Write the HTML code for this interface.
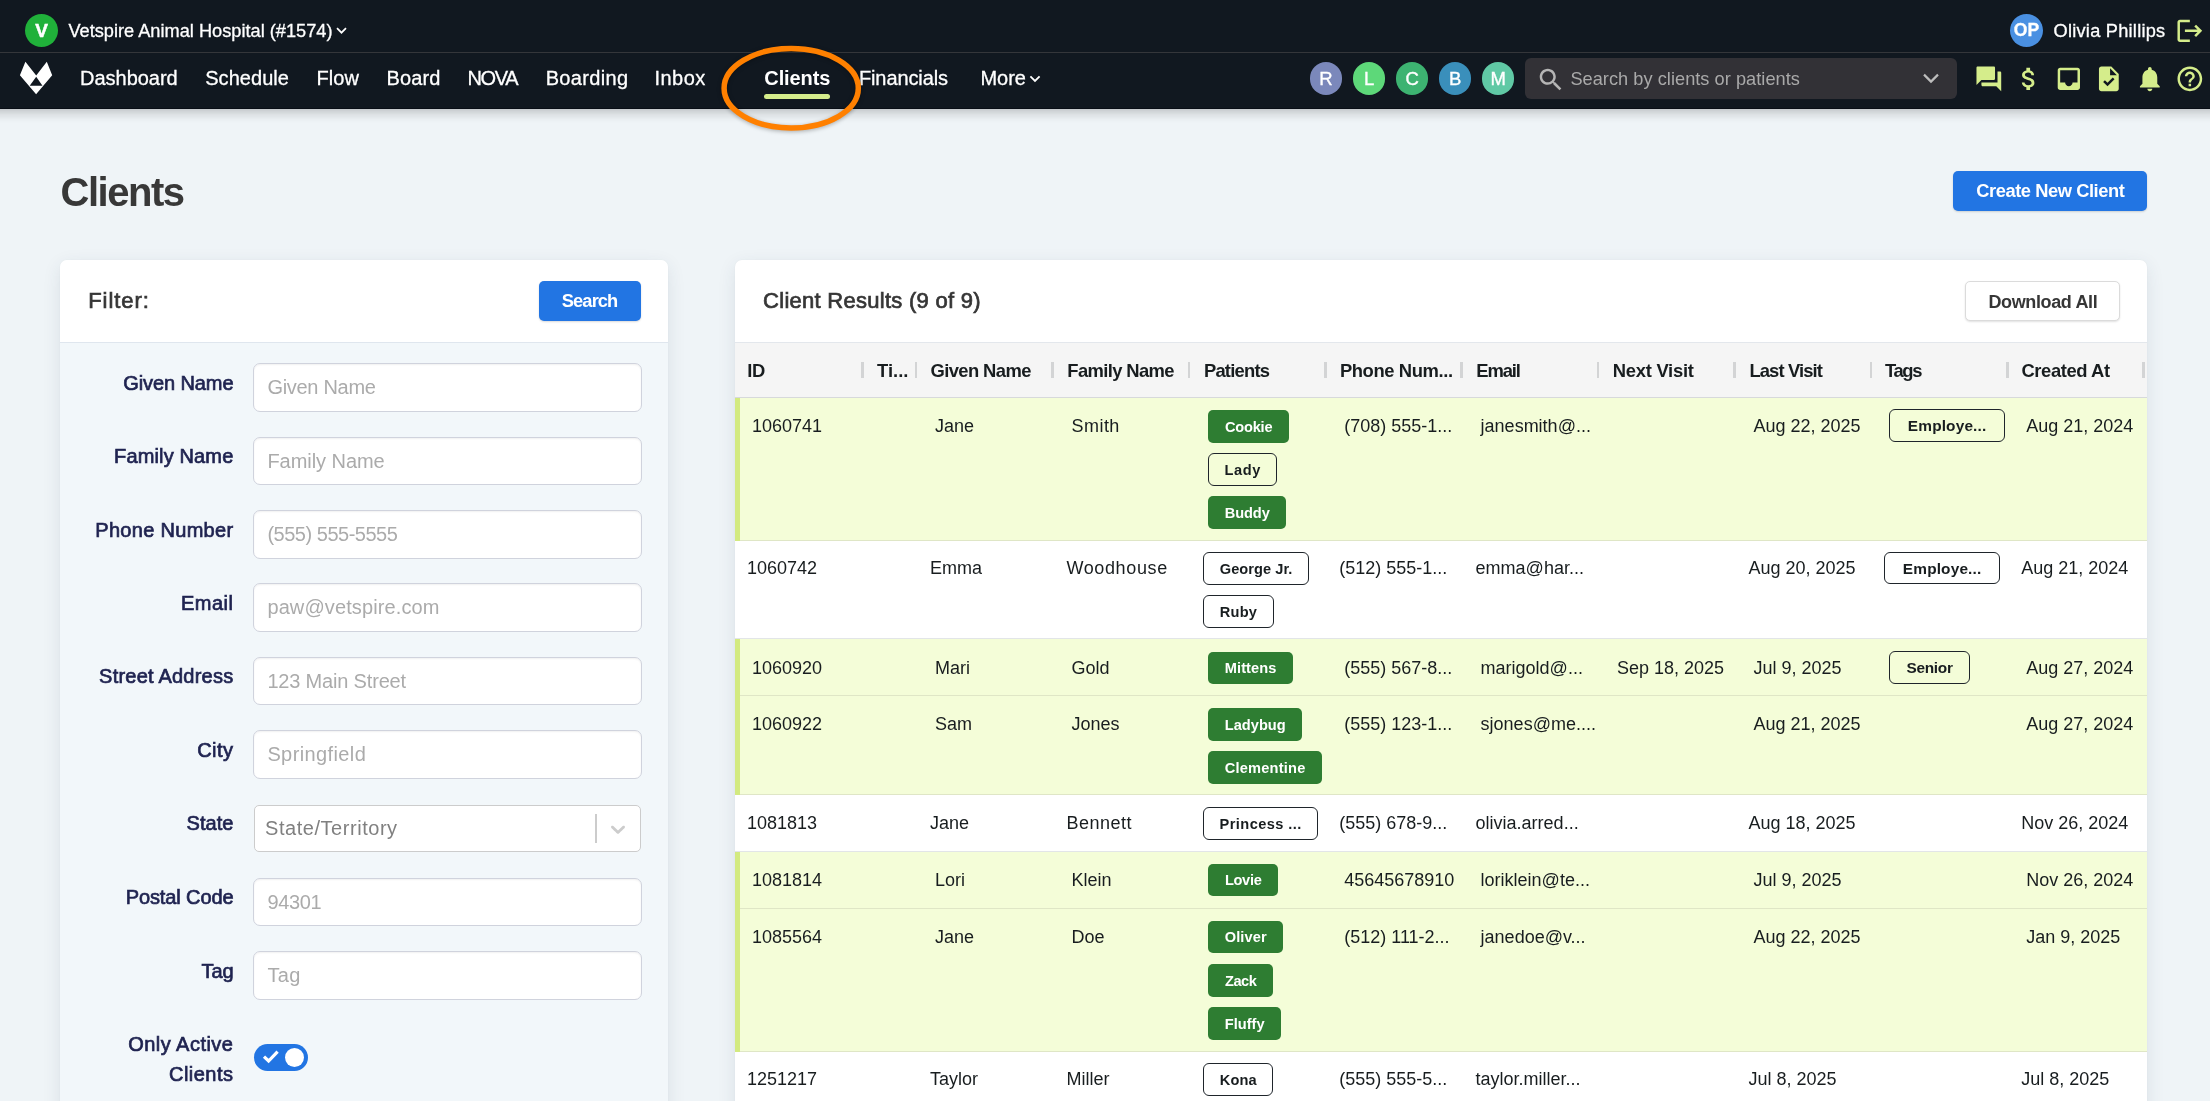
<!DOCTYPE html>
<html lang="en">
<head>
<meta charset="utf-8">
<title>Clients - Vetspire Animal Hospital</title>
<style>
html,body{margin:0;padding:0;}
body{width:2210px;height:1101px;overflow:hidden;background:#eff4f7;font-family:"Liberation Sans",sans-serif;position:relative;}
#app{position:absolute;left:0;top:0;width:2210px;height:1101px;overflow:hidden;will-change:transform;}
span{display:block;}
</style>
</head>
<body>
<div id="app">
<main>
<span id="t21" style="position:absolute;left:60.60px;top:171.54px;font-size:40px;line-height:1;color:#383838;font-weight:700;white-space:nowrap;letter-spacing:-1.493px;">Clients</span>
<div style="position:absolute;left:1953px;top:171px;width:194.00px;height:40.00px;background:#2275e3;border-radius:5px;box-shadow:0 1px 2px rgba(0,0,0,.15);"></div>
<span id="t22" style="position:absolute;left:1976.30px;top:181.71px;font-size:18.3px;line-height:1;color:#fff;font-weight:700;white-space:nowrap;letter-spacing:-0.434px;">Create New Client</span>
<section aria-label="Filter">
<div style="position:absolute;left:60px;top:260px;width:608.00px;height:870.00px;background:#f2f7fa;border-radius:7px;box-shadow:0 5px 18px rgba(40,60,90,.10), 0 0 2px rgba(40,60,90,.06);"></div>
<div style="position:absolute;left:60px;top:260px;width:608.00px;height:82.00px;background:#fff;border-radius:7px 7px 0 0;border-bottom:1px solid #dfe6ee;"></div>
<span id="t23" style="position:absolute;left:88.20px;top:290.38px;font-size:22px;line-height:1;color:#363636;font-weight:400;white-space:nowrap;letter-spacing:0.933px;-webkit-text-stroke:.7px #363636;">Filter:</span>
<div style="position:absolute;left:539px;top:281.2px;width:102.00px;height:39.80px;background:#2275e3;border-radius:5px;box-shadow:0 1px 2px rgba(0,0,0,.15);"></div>
<span id="t24" style="position:absolute;left:561.80px;top:292.11px;font-size:18.3px;line-height:1;color:#fff;font-weight:700;white-space:nowrap;letter-spacing:-0.897px;">Search</span>
<div style="position:absolute;left:253px;top:363.2px;width:389.00px;height:48.50px;background:#fff;border:1.4px solid #d0d3dd;border-radius:7px;box-sizing:border-box;box-shadow:inset 0 1px 2px rgba(10,10,10,.06);"></div>
<span id="t25" style="position:absolute;left:267.40px;top:377.37px;font-size:20px;line-height:1;color:#ababab;font-weight:400;white-space:nowrap;letter-spacing:-0.295px;">Given Name</span>
<span id="t26" style="position:absolute;right:1976.60px;top:372.87px;font-size:20px;line-height:1;color:#1f2350;font-weight:400;white-space:nowrap;letter-spacing:-0.106px;-webkit-text-stroke:.7px #1f2350;">Given Name</span>
<div style="position:absolute;left:253px;top:436.7px;width:389.00px;height:48.50px;background:#fff;border:1.4px solid #d0d3dd;border-radius:7px;box-sizing:border-box;box-shadow:inset 0 1px 2px rgba(10,10,10,.06);"></div>
<span id="t27" style="position:absolute;left:267.40px;top:450.87px;font-size:20px;line-height:1;color:#ababab;font-weight:400;white-space:nowrap;letter-spacing:-0.050px;">Family Name</span>
<span id="t28" style="position:absolute;right:1976.60px;top:446.37px;font-size:20px;line-height:1;color:#1f2350;font-weight:400;white-space:nowrap;letter-spacing:0.140px;-webkit-text-stroke:.7px #1f2350;">Family Name</span>
<div style="position:absolute;left:253px;top:510.0px;width:389.00px;height:48.50px;background:#fff;border:1.4px solid #d0d3dd;border-radius:7px;box-sizing:border-box;box-shadow:inset 0 1px 2px rgba(10,10,10,.06);"></div>
<span id="t29" style="position:absolute;left:267.40px;top:524.17px;font-size:20px;line-height:1;color:#ababab;font-weight:400;white-space:nowrap;letter-spacing:-0.483px;">(555) 555-5555</span>
<span id="t30" style="position:absolute;right:1976.60px;top:519.67px;font-size:20px;line-height:1;color:#1f2350;font-weight:400;white-space:nowrap;letter-spacing:0.297px;-webkit-text-stroke:.7px #1f2350;">Phone Number</span>
<div style="position:absolute;left:253px;top:583.3px;width:389.00px;height:48.50px;background:#fff;border:1.4px solid #d0d3dd;border-radius:7px;box-sizing:border-box;box-shadow:inset 0 1px 2px rgba(10,10,10,.06);"></div>
<span id="t31" style="position:absolute;left:267.40px;top:597.47px;font-size:20px;line-height:1;color:#ababab;font-weight:400;white-space:nowrap;letter-spacing:0.115px;">paw@vetspire.com</span>
<span id="t32" style="position:absolute;right:1976.60px;top:592.97px;font-size:20px;line-height:1;color:#1f2350;font-weight:400;white-space:nowrap;letter-spacing:0.471px;-webkit-text-stroke:.7px #1f2350;">Email</span>
<div style="position:absolute;left:253px;top:656.8px;width:389.00px;height:48.50px;background:#fff;border:1.4px solid #d0d3dd;border-radius:7px;box-sizing:border-box;box-shadow:inset 0 1px 2px rgba(10,10,10,.06);"></div>
<span id="t33" style="position:absolute;left:267.40px;top:670.97px;font-size:20px;line-height:1;color:#ababab;font-weight:400;white-space:nowrap;letter-spacing:-0.179px;">123 Main Street</span>
<span id="t34" style="position:absolute;right:1976.60px;top:666.47px;font-size:20px;line-height:1;color:#1f2350;font-weight:400;white-space:nowrap;letter-spacing:0.224px;-webkit-text-stroke:.7px #1f2350;">Street Address</span>
<div style="position:absolute;left:253px;top:730.3px;width:389.00px;height:48.50px;background:#fff;border:1.4px solid #d0d3dd;border-radius:7px;box-sizing:border-box;box-shadow:inset 0 1px 2px rgba(10,10,10,.06);"></div>
<span id="t35" style="position:absolute;left:267.40px;top:744.47px;font-size:20px;line-height:1;color:#ababab;font-weight:400;white-space:nowrap;letter-spacing:0.388px;">Springfield</span>
<span id="t36" style="position:absolute;right:1976.60px;top:739.97px;font-size:20px;line-height:1;color:#1f2350;font-weight:400;white-space:nowrap;letter-spacing:0.449px;-webkit-text-stroke:.7px #1f2350;">City</span>
<div style="position:absolute;left:254px;top:805.4px;width:387.00px;height:46.20px;background:#fff;border:1px solid #cccccc;border-radius:5px;box-sizing:border-box;"></div>
<span id="t37" style="position:absolute;left:265.10px;top:817.77px;font-size:20px;line-height:1;color:#808080;font-weight:400;white-space:nowrap;letter-spacing:0.537px;">State/Territory</span>
<div style="position:absolute;left:595.3px;top:814.4px;width:1.80px;height:28.60px;background:#cccccc;"></div>
<svg style="position:absolute;left:606px;top:817px" width="24" height="24" viewBox="0 0 20 20"><path fill="#cccccc" d="M4.516 7.548c0.436-0.446 1.043-0.481 1.576 0l3.908 3.747 3.908-3.747c0.533-0.481 1.141-0.446 1.574 0 0.436 0.445 0.408 1.197 0 1.615-0.406 0.418-4.695 4.502-4.695 4.502-0.217 0.223-0.502 0.335-0.787 0.335s-0.57-0.112-0.789-0.335c0 0-4.287-4.084-4.695-4.502s-0.436-1.17 0-1.615z"/></svg>
<span id="t38" style="position:absolute;right:1976.60px;top:813.07px;font-size:20px;line-height:1;color:#1f2350;font-weight:400;white-space:nowrap;letter-spacing:0.024px;-webkit-text-stroke:.7px #1f2350;">State</span>
<div style="position:absolute;left:253px;top:877.6px;width:389.00px;height:48.50px;background:#fff;border:1.4px solid #d0d3dd;border-radius:7px;box-sizing:border-box;box-shadow:inset 0 1px 2px rgba(10,10,10,.06);"></div>
<span id="t39" style="position:absolute;left:267.40px;top:891.77px;font-size:20px;line-height:1;color:#ababab;font-weight:400;white-space:nowrap;letter-spacing:-0.331px;">94301</span>
<span id="t40" style="position:absolute;right:1976.60px;top:887.27px;font-size:20px;line-height:1;color:#1f2350;font-weight:400;white-space:nowrap;letter-spacing:-0.117px;-webkit-text-stroke:.7px #1f2350;">Postal Code</span>
<div style="position:absolute;left:253px;top:951.0px;width:389.00px;height:48.50px;background:#fff;border:1.4px solid #d0d3dd;border-radius:7px;box-sizing:border-box;box-shadow:inset 0 1px 2px rgba(10,10,10,.06);"></div>
<span id="t41" style="position:absolute;left:267.40px;top:965.17px;font-size:20px;line-height:1;color:#ababab;font-weight:400;white-space:nowrap;letter-spacing:0.325px;">Tag</span>
<span id="t42" style="position:absolute;right:1976.60px;top:960.67px;font-size:20px;line-height:1;color:#1f2350;font-weight:400;white-space:nowrap;letter-spacing:-0.125px;-webkit-text-stroke:.7px #1f2350;">Tag</span>
<span id="t43" style="position:absolute;right:1976.60px;top:1034.17px;font-size:20px;line-height:1;color:#1f2350;font-weight:400;white-space:nowrap;letter-spacing:0.475px;-webkit-text-stroke:.7px #1f2350;">Only Active</span>
<span id="t44" style="position:absolute;right:1976.60px;top:1064.47px;font-size:20px;line-height:1;color:#1f2350;font-weight:400;white-space:nowrap;letter-spacing:0.460px;-webkit-text-stroke:.7px #1f2350;">Clients</span>
<div style="position:absolute;left:253.7px;top:1044px;width:54.50px;height:26.60px;background:#2275e3;border-radius:14px;"></div>
<div style="position:absolute;left:284.5px;top:1048px;width:19.00px;height:19.00px;background:#fff;border-radius:50%;"></div>
<svg style="position:absolute;left:261px;top:1048px" width="20" height="18" viewBox="0 0 20 18"><path d="M3 8.6 L7.6 13 L16.6 3.6" fill="none" stroke="#fff" stroke-width="3.2"/></svg>
</section>
<section aria-label="Client Results">
<div style="position:absolute;left:735px;top:260px;width:1412.00px;height:870.00px;background:#fff;border-radius:7px;box-shadow:0 5px 18px rgba(40,60,90,.10), 0 0 2px rgba(40,60,90,.06);"></div>
<span id="t45" style="position:absolute;left:763.10px;top:290.48px;font-size:22px;line-height:1;color:#363636;font-weight:400;white-space:nowrap;letter-spacing:0.267px;-webkit-text-stroke:.7px #363636;">Client Results (9 of 9)</span>
<div style="position:absolute;left:1965.4px;top:281.2px;width:154.40px;height:39.60px;background:#fff;border:1px solid #dbdbdb;border-radius:5px;box-sizing:border-box;box-shadow:0 1px 2px rgba(10,10,10,.12);"></div>
<span id="t46" style="position:absolute;left:1988.40px;top:292.76px;font-size:18px;line-height:1;color:#363636;font-weight:700;white-space:nowrap;letter-spacing:-0.366px;">Download All</span>
<div style="position:absolute;left:735px;top:342px;width:1412.00px;height:55.50px;background:#f5f5f5;border-top:1px solid #e3e7ec;border-bottom:1px solid #d7d9db;box-sizing:border-box;"></div>
<span id="t47" style="position:absolute;left:747.20px;top:361.92px;font-size:18.4px;line-height:1;color:#181d1f;font-weight:700;white-space:nowrap;letter-spacing:-0.306px;">ID</span>
<div style="position:absolute;left:861.3px;top:362.2px;width:2.70px;height:15.80px;background:#d3d4d5;"></div>
<span id="t48" style="position:absolute;left:877.00px;top:361.92px;font-size:18.4px;line-height:1;color:#181d1f;font-weight:700;white-space:nowrap;letter-spacing:0.014px;">Ti...</span>
<div style="position:absolute;left:914.8px;top:362.2px;width:2.70px;height:15.80px;background:#d3d4d5;"></div>
<span id="t49" style="position:absolute;left:930.50px;top:361.92px;font-size:18.4px;line-height:1;color:#181d1f;font-weight:700;white-space:nowrap;letter-spacing:-0.601px;">Given Name</span>
<div style="position:absolute;left:1051.2px;top:362.2px;width:2.70px;height:15.80px;background:#d3d4d5;"></div>
<span id="t50" style="position:absolute;left:1067.30px;top:361.92px;font-size:18.4px;line-height:1;color:#181d1f;font-weight:700;white-space:nowrap;letter-spacing:-0.627px;">Family Name</span>
<div style="position:absolute;left:1187.6px;top:362.2px;width:2.70px;height:15.80px;background:#d3d4d5;"></div>
<span id="t51" style="position:absolute;left:1203.90px;top:361.92px;font-size:18.4px;line-height:1;color:#181d1f;font-weight:700;white-space:nowrap;letter-spacing:-0.764px;">Patients</span>
<div style="position:absolute;left:1324.0px;top:362.2px;width:2.70px;height:15.80px;background:#d3d4d5;"></div>
<span id="t52" style="position:absolute;left:1339.90px;top:361.92px;font-size:18.4px;line-height:1;color:#181d1f;font-weight:700;white-space:nowrap;letter-spacing:-0.392px;">Phone Num...</span>
<div style="position:absolute;left:1460.3999999999999px;top:362.2px;width:2.70px;height:15.80px;background:#d3d4d5;"></div>
<span id="t53" style="position:absolute;left:1476.20px;top:361.92px;font-size:18.4px;line-height:1;color:#181d1f;font-weight:700;white-space:nowrap;letter-spacing:-1.070px;">Email</span>
<div style="position:absolute;left:1596.8px;top:362.2px;width:2.70px;height:15.80px;background:#d3d4d5;"></div>
<span id="t54" style="position:absolute;left:1612.80px;top:361.92px;font-size:18.4px;line-height:1;color:#181d1f;font-weight:700;white-space:nowrap;letter-spacing:-0.265px;">Next Visit</span>
<div style="position:absolute;left:1733.2px;top:362.2px;width:2.70px;height:15.80px;background:#d3d4d5;"></div>
<span id="t55" style="position:absolute;left:1749.40px;top:361.92px;font-size:18.4px;line-height:1;color:#181d1f;font-weight:700;white-space:nowrap;letter-spacing:-0.882px;">Last Visit</span>
<div style="position:absolute;left:1869.6px;top:362.2px;width:2.70px;height:15.80px;background:#d3d4d5;"></div>
<span id="t56" style="position:absolute;left:1885.10px;top:361.92px;font-size:18.4px;line-height:1;color:#181d1f;font-weight:700;white-space:nowrap;letter-spacing:-1.421px;">Tags</span>
<div style="position:absolute;left:2006.0px;top:362.2px;width:2.70px;height:15.80px;background:#d3d4d5;"></div>
<span id="t57" style="position:absolute;left:2021.50px;top:361.92px;font-size:18.4px;line-height:1;color:#181d1f;font-weight:700;white-space:nowrap;letter-spacing:-0.413px;">Created At</span>
<div style="position:absolute;left:2142.4px;top:362.2px;width:2.70px;height:15.80px;background:#d3d4d5;"></div>
<div style="position:absolute;left:735px;top:397.5px;width:1412.00px;height:143.40px;background:#f4fdd8;border-bottom:1px solid #dfe6c6;box-sizing:border-box;"></div>
<div style="position:absolute;left:735px;top:397.5px;width:5.00px;height:143.40px;background:#d3ea80;"></div>
<span id="t58" style="position:absolute;left:752.00px;top:417.06px;font-size:18px;line-height:1;color:#181d1f;font-weight:400;white-space:nowrap;">1060741</span>
<span id="t59" style="position:absolute;left:935.00px;top:417.06px;font-size:18px;line-height:1;color:#181d1f;font-weight:400;white-space:nowrap;">Jane</span>
<span id="t60" style="position:absolute;left:1071.40px;top:417.06px;font-size:18px;line-height:1;color:#181d1f;font-weight:400;white-space:nowrap;letter-spacing:0.496px;">Smith</span>
<span id="t61" style="position:absolute;left:1344.20px;top:417.06px;font-size:18px;line-height:1;color:#181d1f;font-weight:400;white-space:nowrap;">(708) 555-1...</span>
<span id="t62" style="position:absolute;left:1480.60px;top:417.06px;font-size:18px;line-height:1;color:#181d1f;font-weight:400;white-space:nowrap;">janesmith@...</span>
<span id="t63" style="position:absolute;left:1753.40px;top:417.06px;font-size:18px;line-height:1;color:#181d1f;font-weight:400;white-space:nowrap;">Aug 22, 2025</span>
<span id="t64" style="position:absolute;left:2026.20px;top:417.06px;font-size:18px;line-height:1;color:#181d1f;font-weight:400;white-space:nowrap;">Aug 21, 2024</span>
<div style="position:absolute;left:1208.2px;top:410.0px;width:80.90px;height:32.50px;background:#2e7d32;border-radius:5px;"></div><span id="t65" style="position:absolute;left:1248.65px;transform:translateX(-50%);top:419.54px;font-size:14.6px;line-height:1;color:#fff;font-weight:700;white-space:nowrap;letter-spacing:-0.191px;">Cookie</span>
<div style="position:absolute;left:1208.2px;top:453.1px;width:69.00px;height:32.80px;border:1.35px solid #1f252b;border-radius:6px;box-sizing:border-box;"></div><span id="t66" style="position:absolute;left:1242.70px;transform:translateX(-50%);top:463.14px;font-size:14.6px;line-height:1;color:#181d1f;font-weight:700;white-space:nowrap;letter-spacing:0.579px;">Lady</span>
<div style="position:absolute;left:1208.2px;top:496.2px;width:78.10px;height:32.50px;background:#2e7d32;border-radius:5px;"></div><span id="t67" style="position:absolute;left:1247.25px;transform:translateX(-50%);top:505.74px;font-size:14.6px;line-height:1;color:#fff;font-weight:700;white-space:nowrap;letter-spacing:-0.127px;">Buddy</span>
<div style="position:absolute;left:1889.3999999999999px;top:409.4px;width:115.50px;height:32.80px;border:1.35px solid #1f252b;border-radius:6px;box-sizing:border-box;"></div><span id="t68" style="position:absolute;left:1947.15px;transform:translateX(-50%);top:418.46px;font-size:15.4px;line-height:1;color:#181d1f;font-weight:700;white-space:nowrap;letter-spacing:0.157px;">Employe...</span>
<div style="position:absolute;left:735px;top:540.9px;width:1412.00px;height:98.10px;background:#fff;border-bottom:1px solid #e2e5e8;box-sizing:border-box;"></div>
<span id="t69" style="position:absolute;left:747.00px;top:559.16px;font-size:18px;line-height:1;color:#181d1f;font-weight:400;white-space:nowrap;">1060742</span>
<span id="t70" style="position:absolute;left:930.00px;top:559.16px;font-size:18px;line-height:1;color:#181d1f;font-weight:400;white-space:nowrap;">Emma</span>
<span id="t71" style="position:absolute;left:1066.40px;top:559.16px;font-size:18px;line-height:1;color:#181d1f;font-weight:400;white-space:nowrap;letter-spacing:0.631px;">Woodhouse</span>
<span id="t72" style="position:absolute;left:1339.20px;top:559.16px;font-size:18px;line-height:1;color:#181d1f;font-weight:400;white-space:nowrap;">(512) 555-1...</span>
<span id="t73" style="position:absolute;left:1475.60px;top:559.16px;font-size:18px;line-height:1;color:#181d1f;font-weight:400;white-space:nowrap;">emma@har...</span>
<span id="t74" style="position:absolute;left:1748.40px;top:559.16px;font-size:18px;line-height:1;color:#181d1f;font-weight:400;white-space:nowrap;">Aug 20, 2025</span>
<span id="t75" style="position:absolute;left:2021.20px;top:559.16px;font-size:18px;line-height:1;color:#181d1f;font-weight:400;white-space:nowrap;">Aug 21, 2024</span>
<div style="position:absolute;left:1203.2px;top:552.1px;width:105.80px;height:32.80px;border:1.35px solid #1f252b;border-radius:6px;box-sizing:border-box;"></div><span id="t76" style="position:absolute;left:1256.10px;transform:translateX(-50%);top:562.14px;font-size:14.6px;line-height:1;color:#181d1f;font-weight:700;white-space:nowrap;letter-spacing:0.044px;">George Jr.</span>
<div style="position:absolute;left:1203.2px;top:595.2px;width:70.50px;height:32.80px;border:1.35px solid #1f252b;border-radius:6px;box-sizing:border-box;"></div><span id="t77" style="position:absolute;left:1238.45px;transform:translateX(-50%);top:605.24px;font-size:14.6px;line-height:1;color:#181d1f;font-weight:700;white-space:nowrap;letter-spacing:0.272px;">Ruby</span>
<div style="position:absolute;left:1884.3999999999999px;top:551.5px;width:115.50px;height:32.80px;border:1.35px solid #1f252b;border-radius:6px;box-sizing:border-box;"></div><span id="t78" style="position:absolute;left:1942.15px;transform:translateX(-50%);top:560.56px;font-size:15.4px;line-height:1;color:#181d1f;font-weight:700;white-space:nowrap;letter-spacing:0.157px;">Employe...</span>
<div style="position:absolute;left:735px;top:639.0px;width:1412.00px;height:57.00px;background:#f4fdd8;border-bottom:1px solid #dfe6c6;box-sizing:border-box;"></div>
<div style="position:absolute;left:735px;top:639.0px;width:5.00px;height:57.00px;background:#d3ea80;"></div>
<span id="t79" style="position:absolute;left:752.00px;top:658.66px;font-size:18px;line-height:1;color:#181d1f;font-weight:400;white-space:nowrap;">1060920</span>
<span id="t80" style="position:absolute;left:935.00px;top:658.66px;font-size:18px;line-height:1;color:#181d1f;font-weight:400;white-space:nowrap;">Mari</span>
<span id="t81" style="position:absolute;left:1071.40px;top:658.66px;font-size:18px;line-height:1;color:#181d1f;font-weight:400;white-space:nowrap;">Gold</span>
<span id="t82" style="position:absolute;left:1344.20px;top:658.66px;font-size:18px;line-height:1;color:#181d1f;font-weight:400;white-space:nowrap;">(555) 567-8...</span>
<span id="t83" style="position:absolute;left:1480.60px;top:658.66px;font-size:18px;line-height:1;color:#181d1f;font-weight:400;white-space:nowrap;">marigold@...</span>
<span id="t84" style="position:absolute;left:1617.00px;top:658.66px;font-size:18px;line-height:1;color:#181d1f;font-weight:400;white-space:nowrap;">Sep 18, 2025</span>
<span id="t85" style="position:absolute;left:1753.40px;top:658.66px;font-size:18px;line-height:1;color:#181d1f;font-weight:400;white-space:nowrap;">Jul 9, 2025</span>
<span id="t86" style="position:absolute;left:2026.20px;top:658.66px;font-size:18px;line-height:1;color:#181d1f;font-weight:400;white-space:nowrap;">Aug 27, 2024</span>
<div style="position:absolute;left:1208.2px;top:651.6px;width:84.90px;height:32.50px;background:#2e7d32;border-radius:5px;"></div><span id="t87" style="position:absolute;left:1250.65px;transform:translateX(-50%);top:661.14px;font-size:14.6px;line-height:1;color:#fff;font-weight:700;white-space:nowrap;letter-spacing:0.104px;">Mittens</span>
<div style="position:absolute;left:1889.3999999999999px;top:651.0px;width:80.40px;height:32.80px;border:1.35px solid #1f252b;border-radius:6px;box-sizing:border-box;"></div><span id="t88" style="position:absolute;left:1929.60px;transform:translateX(-50%);top:660.06px;font-size:15.4px;line-height:1;color:#181d1f;font-weight:700;white-space:nowrap;letter-spacing:-0.281px;">Senior</span>
<div style="position:absolute;left:735px;top:696.0px;width:1412.00px;height:99.00px;background:#f4fdd8;border-bottom:1px solid #dfe6c6;box-sizing:border-box;"></div>
<div style="position:absolute;left:735px;top:696.0px;width:5.00px;height:99.00px;background:#d3ea80;"></div>
<span id="t89" style="position:absolute;left:752.00px;top:715.16px;font-size:18px;line-height:1;color:#181d1f;font-weight:400;white-space:nowrap;">1060922</span>
<span id="t90" style="position:absolute;left:935.00px;top:715.16px;font-size:18px;line-height:1;color:#181d1f;font-weight:400;white-space:nowrap;">Sam</span>
<span id="t91" style="position:absolute;left:1071.40px;top:715.16px;font-size:18px;line-height:1;color:#181d1f;font-weight:400;white-space:nowrap;">Jones</span>
<span id="t92" style="position:absolute;left:1344.20px;top:715.16px;font-size:18px;line-height:1;color:#181d1f;font-weight:400;white-space:nowrap;">(555) 123-1...</span>
<span id="t93" style="position:absolute;left:1480.60px;top:715.16px;font-size:18px;line-height:1;color:#181d1f;font-weight:400;white-space:nowrap;">sjones@me....</span>
<span id="t94" style="position:absolute;left:1753.40px;top:715.16px;font-size:18px;line-height:1;color:#181d1f;font-weight:400;white-space:nowrap;">Aug 21, 2025</span>
<span id="t95" style="position:absolute;left:2026.20px;top:715.16px;font-size:18px;line-height:1;color:#181d1f;font-weight:400;white-space:nowrap;">Aug 27, 2024</span>
<div style="position:absolute;left:1208.2px;top:708.1px;width:94.10px;height:32.50px;background:#2e7d32;border-radius:5px;"></div><span id="t96" style="position:absolute;left:1255.25px;transform:translateX(-50%);top:717.64px;font-size:14.6px;line-height:1;color:#fff;font-weight:700;white-space:nowrap;letter-spacing:0.015px;">Ladybug</span>
<div style="position:absolute;left:1208.2px;top:751.2px;width:113.90px;height:32.50px;background:#2e7d32;border-radius:5px;"></div><span id="t97" style="position:absolute;left:1265.15px;transform:translateX(-50%);top:760.74px;font-size:14.6px;line-height:1;color:#fff;font-weight:700;white-space:nowrap;letter-spacing:0.225px;">Clementine</span>
<div style="position:absolute;left:735px;top:795.0px;width:1412.00px;height:56.80px;background:#fff;border-bottom:1px solid #e2e5e8;box-sizing:border-box;"></div>
<span id="t98" style="position:absolute;left:747.00px;top:814.16px;font-size:18px;line-height:1;color:#181d1f;font-weight:400;white-space:nowrap;">1081813</span>
<span id="t99" style="position:absolute;left:930.00px;top:814.16px;font-size:18px;line-height:1;color:#181d1f;font-weight:400;white-space:nowrap;">Jane</span>
<span id="t100" style="position:absolute;left:1066.40px;top:814.16px;font-size:18px;line-height:1;color:#181d1f;font-weight:400;white-space:nowrap;letter-spacing:0.490px;">Bennett</span>
<span id="t101" style="position:absolute;left:1339.20px;top:814.16px;font-size:18px;line-height:1;color:#181d1f;font-weight:400;white-space:nowrap;">(555) 678-9...</span>
<span id="t102" style="position:absolute;left:1475.60px;top:814.16px;font-size:18px;line-height:1;color:#181d1f;font-weight:400;white-space:nowrap;">olivia.arred...</span>
<span id="t103" style="position:absolute;left:1748.40px;top:814.16px;font-size:18px;line-height:1;color:#181d1f;font-weight:400;white-space:nowrap;">Aug 18, 2025</span>
<span id="t104" style="position:absolute;left:2021.20px;top:814.16px;font-size:18px;line-height:1;color:#181d1f;font-weight:400;white-space:nowrap;">Nov 26, 2024</span>
<div style="position:absolute;left:1203.2px;top:807.1px;width:114.90px;height:32.80px;border:1.35px solid #1f252b;border-radius:6px;box-sizing:border-box;"></div><span id="t105" style="position:absolute;left:1260.65px;transform:translateX(-50%);top:817.14px;font-size:14.6px;line-height:1;color:#181d1f;font-weight:700;white-space:nowrap;letter-spacing:0.420px;">Princess ...</span>
<div style="position:absolute;left:735px;top:851.8px;width:1412.00px;height:57.00px;background:#f4fdd8;border-bottom:1px solid #dfe6c6;box-sizing:border-box;"></div>
<div style="position:absolute;left:735px;top:851.8px;width:5.00px;height:57.00px;background:#d3ea80;"></div>
<span id="t106" style="position:absolute;left:752.00px;top:870.96px;font-size:18px;line-height:1;color:#181d1f;font-weight:400;white-space:nowrap;">1081814</span>
<span id="t107" style="position:absolute;left:935.00px;top:870.96px;font-size:18px;line-height:1;color:#181d1f;font-weight:400;white-space:nowrap;">Lori</span>
<span id="t108" style="position:absolute;left:1071.40px;top:870.96px;font-size:18px;line-height:1;color:#181d1f;font-weight:400;white-space:nowrap;">Klein</span>
<span id="t109" style="position:absolute;left:1344.20px;top:870.96px;font-size:18px;line-height:1;color:#181d1f;font-weight:400;white-space:nowrap;">45645678910</span>
<span id="t110" style="position:absolute;left:1480.60px;top:870.96px;font-size:18px;line-height:1;color:#181d1f;font-weight:400;white-space:nowrap;">loriklein@te...</span>
<span id="t111" style="position:absolute;left:1753.40px;top:870.96px;font-size:18px;line-height:1;color:#181d1f;font-weight:400;white-space:nowrap;">Jul 9, 2025</span>
<span id="t112" style="position:absolute;left:2026.20px;top:870.96px;font-size:18px;line-height:1;color:#181d1f;font-weight:400;white-space:nowrap;">Nov 26, 2024</span>
<div style="position:absolute;left:1208.2px;top:863.9px;width:70.00px;height:32.50px;background:#2e7d32;border-radius:5px;"></div><span id="t113" style="position:absolute;left:1243.20px;transform:translateX(-50%);top:873.44px;font-size:14.6px;line-height:1;color:#fff;font-weight:700;white-space:nowrap;letter-spacing:-0.331px;">Lovie</span>
<div style="position:absolute;left:735px;top:908.8px;width:1412.00px;height:142.90px;background:#f4fdd8;border-bottom:1px solid #dfe6c6;box-sizing:border-box;"></div>
<div style="position:absolute;left:735px;top:908.8px;width:5.00px;height:142.90px;background:#d3ea80;"></div>
<span id="t114" style="position:absolute;left:752.00px;top:927.96px;font-size:18px;line-height:1;color:#181d1f;font-weight:400;white-space:nowrap;">1085564</span>
<span id="t115" style="position:absolute;left:935.00px;top:927.96px;font-size:18px;line-height:1;color:#181d1f;font-weight:400;white-space:nowrap;">Jane</span>
<span id="t116" style="position:absolute;left:1071.40px;top:927.96px;font-size:18px;line-height:1;color:#181d1f;font-weight:400;white-space:nowrap;">Doe</span>
<span id="t117" style="position:absolute;left:1344.20px;top:927.96px;font-size:18px;line-height:1;color:#181d1f;font-weight:400;white-space:nowrap;">(512) 111-2...</span>
<span id="t118" style="position:absolute;left:1480.60px;top:927.96px;font-size:18px;line-height:1;color:#181d1f;font-weight:400;white-space:nowrap;">janedoe@v...</span>
<span id="t119" style="position:absolute;left:1753.40px;top:927.96px;font-size:18px;line-height:1;color:#181d1f;font-weight:400;white-space:nowrap;">Aug 22, 2025</span>
<span id="t120" style="position:absolute;left:2026.20px;top:927.96px;font-size:18px;line-height:1;color:#181d1f;font-weight:400;white-space:nowrap;">Jan 9, 2025</span>
<div style="position:absolute;left:1208.2px;top:920.9px;width:75.10px;height:32.50px;background:#2e7d32;border-radius:5px;"></div><span id="t121" style="position:absolute;left:1245.75px;transform:translateX(-50%);top:930.44px;font-size:14.6px;line-height:1;color:#fff;font-weight:700;white-space:nowrap;letter-spacing:0.105px;">Oliver</span>
<div style="position:absolute;left:1208.2px;top:964.0px;width:65.00px;height:32.50px;background:#2e7d32;border-radius:5px;"></div><span id="t122" style="position:absolute;left:1240.70px;transform:translateX(-50%);top:973.54px;font-size:14.6px;line-height:1;color:#fff;font-weight:700;white-space:nowrap;letter-spacing:-0.489px;">Zack</span>
<div style="position:absolute;left:1208.2px;top:1007.1px;width:73.00px;height:32.50px;background:#2e7d32;border-radius:5px;"></div><span id="t123" style="position:absolute;left:1244.70px;transform:translateX(-50%);top:1016.64px;font-size:14.6px;line-height:1;color:#fff;font-weight:700;white-space:nowrap;letter-spacing:0.013px;">Fluffy</span>
<div style="position:absolute;left:735px;top:1051.7px;width:1412.00px;height:58.30px;background:#fff;border-bottom:1px solid #e2e5e8;box-sizing:border-box;"></div>
<span id="t124" style="position:absolute;left:747.00px;top:1069.96px;font-size:18px;line-height:1;color:#181d1f;font-weight:400;white-space:nowrap;">1251217</span>
<span id="t125" style="position:absolute;left:930.00px;top:1069.96px;font-size:18px;line-height:1;color:#181d1f;font-weight:400;white-space:nowrap;">Taylor</span>
<span id="t126" style="position:absolute;left:1066.40px;top:1069.96px;font-size:18px;line-height:1;color:#181d1f;font-weight:400;white-space:nowrap;">Miller</span>
<span id="t127" style="position:absolute;left:1339.20px;top:1069.96px;font-size:18px;line-height:1;color:#181d1f;font-weight:400;white-space:nowrap;">(555) 555-5...</span>
<span id="t128" style="position:absolute;left:1475.60px;top:1069.96px;font-size:18px;line-height:1;color:#181d1f;font-weight:400;white-space:nowrap;">taylor.miller...</span>
<span id="t129" style="position:absolute;left:1748.40px;top:1069.96px;font-size:18px;line-height:1;color:#181d1f;font-weight:400;white-space:nowrap;">Jul 8, 2025</span>
<span id="t130" style="position:absolute;left:2021.20px;top:1069.96px;font-size:18px;line-height:1;color:#181d1f;font-weight:400;white-space:nowrap;">Jul 8, 2025</span>
<div style="position:absolute;left:1203.2px;top:1062.9px;width:70.00px;height:32.80px;border:1.35px solid #1f252b;border-radius:6px;box-sizing:border-box;"></div><span id="t131" style="position:absolute;left:1238.20px;transform:translateX(-50%);top:1072.94px;font-size:14.6px;line-height:1;color:#181d1f;font-weight:700;white-space:nowrap;letter-spacing:0.105px;">Kona</span>
</section>
</main>
<header>
<div style="position:absolute;left:0px;top:0px;width:2210.00px;height:108.50px;background:#111820;"></div>
<div style="position:absolute;left:0px;top:108.5px;width:2210.00px;height:14.50px;background:linear-gradient(to bottom, rgba(0,0,0,.17), rgba(0,0,0,.075) 40%, rgba(0,0,0,.02) 75%, rgba(0,0,0,0));"></div>
<div style="position:absolute;left:0px;top:107.5px;width:2210.00px;height:1.00px;background:#090e16;"></div>
<div style="position:absolute;left:0px;top:52px;width:2210.00px;height:1.00px;background:#34363a;"></div>
<div style="position:absolute;left:25px;top:14px;width:33.00px;height:33.00px;background:#20b13a;border-radius:50%;"></div>
<span id="t1" style="position:absolute;left:41.50px;transform:translateX(-50%);top:21.12px;font-size:19px;line-height:1;color:#fff;font-weight:700;white-space:nowrap;-webkit-text-stroke:.5px #fff;">V</span>
<span id="t2" style="position:absolute;left:68.40px;top:21.69px;font-size:18.2px;line-height:1;color:#fff;font-weight:400;white-space:nowrap;letter-spacing:0.007px;-webkit-text-stroke:.3px #fff;">Vetspire Animal Hospital (#1574)</span>
<svg style="position:absolute;left:335px;top:25px" width="13" height="11" viewBox="0 0 13 11"><path d="M2 3.2 L6.5 7.7 L11 3.2" fill="none" stroke="#fff" stroke-width="1.7"/></svg>
<div style="position:absolute;left:2010px;top:14px;width:33.00px;height:33.00px;background:#4a90e2;border-radius:50%;"></div>
<span id="t3" style="position:absolute;left:2026.50px;transform:translateX(-50%);top:22.09px;font-size:17.5px;line-height:1;color:#fff;font-weight:700;white-space:nowrap;letter-spacing:0.203px;-webkit-text-stroke:.3px #fff;">OP</span>
<span id="t4" style="position:absolute;left:2053.50px;top:21.69px;font-size:18.2px;line-height:1;color:#fff;font-weight:400;white-space:nowrap;letter-spacing:0.253px;-webkit-text-stroke:.3px #fff;">Olivia Phillips</span>
<svg style="position:absolute;left:2174.60px;top:16.00px" width="29.7" height="29.7" viewBox="0 0 24 24"><path fill="#d5ed8b" d="M17 7l-1.41 1.41L18.17 11H8v2h10.17l-2.58 2.58L17 17l5-5zM4 5h8V3H4c-1.1 0-2 .9-2 2v14c0 1.1.9 2 2 2h8v-2H4V5z"/></svg>
<svg style="position:absolute;left:18px;top:58px" width="38" height="40" viewBox="18 58 38 40"><path fill="#fff" fill-rule="evenodd" d="M25.4 61.7 L36.2 75.4 L46.8 61.7 L52.2 75.3 L36.1 94.3 L19.9 75.3 Z M36.2 76.7 L42.5 85.8 L29.7 85.8 Z"/></svg>
<span id="t5" style="position:absolute;left:80.10px;top:67.67px;font-size:20px;line-height:1;color:#fff;font-weight:400;white-space:nowrap;letter-spacing:-0.030px;-webkit-text-stroke:.3px #fff;">Dashboard</span>
<span id="t6" style="position:absolute;left:205.20px;top:67.67px;font-size:20px;line-height:1;color:#fff;font-weight:400;white-space:nowrap;letter-spacing:0.056px;-webkit-text-stroke:.3px #fff;">Schedule</span>
<span id="t7" style="position:absolute;left:316.50px;top:67.67px;font-size:20px;line-height:1;color:#fff;font-weight:400;white-space:nowrap;letter-spacing:0.089px;-webkit-text-stroke:.3px #fff;">Flow</span>
<span id="t8" style="position:absolute;left:386.60px;top:67.67px;font-size:20px;line-height:1;color:#fff;font-weight:400;white-space:nowrap;letter-spacing:0.081px;-webkit-text-stroke:.3px #fff;">Board</span>
<span id="t9" style="position:absolute;left:467.50px;top:67.67px;font-size:20px;line-height:1;color:#fff;font-weight:400;white-space:nowrap;letter-spacing:-1.334px;-webkit-text-stroke:.3px #fff;">NOVA</span>
<span id="t10" style="position:absolute;left:545.70px;top:67.67px;font-size:20px;line-height:1;color:#fff;font-weight:400;white-space:nowrap;letter-spacing:0.334px;-webkit-text-stroke:.3px #fff;">Boarding</span>
<span id="t11" style="position:absolute;left:654.50px;top:67.67px;font-size:20px;line-height:1;color:#fff;font-weight:400;white-space:nowrap;letter-spacing:0.441px;-webkit-text-stroke:.3px #fff;">Inbox</span>
<span id="t12" style="position:absolute;left:858.90px;top:67.67px;font-size:20px;line-height:1;color:#fff;font-weight:400;white-space:nowrap;letter-spacing:-0.094px;-webkit-text-stroke:.3px #fff;">Financials</span>
<span id="t13" style="position:absolute;left:980.50px;top:67.67px;font-size:20px;line-height:1;color:#fff;font-weight:400;white-space:nowrap;letter-spacing:-0.059px;-webkit-text-stroke:.3px #fff;">More</span>
<span id="t14" style="position:absolute;left:764.30px;top:67.67px;font-size:20px;line-height:1;color:#fff;font-weight:700;white-space:nowrap;letter-spacing:-0.098px;">Clients</span>
<div style="position:absolute;left:763.7px;top:93.7px;width:66.30px;height:5.40px;background:#d5ed8b;border-radius:3px;"></div>
<svg style="position:absolute;left:1028px;top:72px" width="14" height="13" viewBox="0 0 14 13"><path d="M2.4 4.4 L7 9 L11.6 4.4" fill="none" stroke="#fff" stroke-width="1.8"/></svg>
<div style="position:absolute;left:1309.7px;top:62.1px;width:32.60px;height:32.60px;background:#7b88bb;border-radius:50%;"></div>
<span id="t15" style="position:absolute;left:1326.00px;transform:translateX(-50%);top:70.14px;font-size:18.5px;line-height:1;color:#fff;font-weight:400;white-space:nowrap;-webkit-text-stroke:.35px #fff;">R</span>
<div style="position:absolute;left:1352.75px;top:62.1px;width:32.60px;height:32.60px;background:#5dd879;border-radius:50%;"></div>
<span id="t16" style="position:absolute;left:1369.05px;transform:translateX(-50%);top:70.14px;font-size:18.5px;line-height:1;color:#fff;font-weight:400;white-space:nowrap;-webkit-text-stroke:.35px #fff;">L</span>
<div style="position:absolute;left:1395.8px;top:62.1px;width:32.60px;height:32.60px;background:#3db371;border-radius:50%;"></div>
<span id="t17" style="position:absolute;left:1412.10px;transform:translateX(-50%);top:70.14px;font-size:18.5px;line-height:1;color:#fff;font-weight:400;white-space:nowrap;-webkit-text-stroke:.35px #fff;">C</span>
<div style="position:absolute;left:1438.8500000000001px;top:62.1px;width:32.60px;height:32.60px;background:#3a8fbb;border-radius:50%;"></div>
<span id="t18" style="position:absolute;left:1455.15px;transform:translateX(-50%);top:70.14px;font-size:18.5px;line-height:1;color:#fff;font-weight:400;white-space:nowrap;-webkit-text-stroke:.35px #fff;">B</span>
<div style="position:absolute;left:1481.9px;top:62.1px;width:32.60px;height:32.60px;background:#60c9a5;border-radius:50%;"></div>
<span id="t19" style="position:absolute;left:1498.20px;transform:translateX(-50%);top:70.14px;font-size:18.5px;line-height:1;color:#fff;font-weight:400;white-space:nowrap;-webkit-text-stroke:.35px #fff;">M</span>
<div style="position:absolute;left:1525px;top:58px;width:432.00px;height:41.00px;background:#323136;border-radius:6px;"></div>
<svg style="position:absolute;left:1535.80px;top:64.50px" width="29.7" height="29.7" viewBox="0 0 24 24"><path fill="#b5b5b5" d="M15.5 14h-.79l-.28-.27C15.41 12.59 16 11.11 16 9.5 16 5.91 13.09 3 9.5 3S3 5.91 3 9.5 5.91 16 9.5 16c1.61 0 3.09-.59 4.23-1.57l.27.28v.79l5 4.99L20.49 19l-4.99-5zm-6 0C7.01 14 5 11.99 5 9.5S7.01 5 9.5 5 14 7.01 14 9.5 11.99 14 9.5 14z"/></svg>
<span id="t20" style="position:absolute;left:1570.40px;top:69.59px;font-size:18.2px;line-height:1;color:#a9a9a9;font-weight:400;white-space:nowrap;letter-spacing:0.036px;">Search by clients or patients</span>
<svg style="position:absolute;left:1920px;top:70px" width="22" height="16" viewBox="0 0 22 16"><path d="M4 4.6 L11 11.6 L18 4.6" fill="none" stroke="#bdbdbd" stroke-width="2.2"/></svg>
<svg style="position:absolute;left:1973.60px;top:63.70px" width="29.7" height="29.7" viewBox="0 0 24 24"><path fill="#d5ed8b" d="M21 6h-2v9H6v2c0 .55.45 1 1 1h11l4 4V7c0-.55-.45-1-1-1zm-4 6V3c0-.55-.45-1-1-1H3c-.55 0-1 .45-1 1v14l4-4h10c.55 0 1-.45 1-1z"/></svg>
<svg style="position:absolute;left:2013.85px;top:63.70px" width="29.7" height="29.7" viewBox="0 0 24 24"><path fill="#d5ed8b" d="M11.8 10.9c-2.27-.59-3-1.2-3-2.15 0-1.09 1.01-1.85 2.7-1.85 1.78 0 2.44.85 2.5 2.1h2.21c-.07-1.72-1.12-3.3-3.21-3.81V3h-3v2.16c-1.94.42-3.5 1.68-3.5 3.61 0 2.31 1.91 3.46 4.7 4.13 2.5.6 3 1.48 3 2.41 0 .69-.49 1.79-2.7 1.79-2.06 0-2.87-.92-2.98-2.1h-2.2c.12 2.19 1.76 3.42 3.68 3.83V21h3v-2.15c1.95-.37 3.5-1.5 3.5-3.55 0-2.84-2.43-3.81-4.7-4.4z"/></svg>
<svg style="position:absolute;left:2054.10px;top:63.70px" width="29.7" height="29.7" viewBox="0 0 24 24"><path fill="#d5ed8b" d="M19 3H4.99c-1.11 0-1.98.89-1.98 2L3 19c0 1.1.88 2 1.99 2H19c1.1 0 2-.9 2-2V5c0-1.11-.9-2-2-2zm0 12h-4c0 1.66-1.35 3-3 3s-3-1.34-3-3H4.99V5H19v10z"/></svg>
<svg style="position:absolute;left:2094.35px;top:63.70px" width="29.7" height="29.7" viewBox="0 0 24 24"><path fill="#d5ed8b" d="M14 2H6c-1.1 0-1.99.9-1.99 2L4 20c0 1.1.89 2 1.99 2H18c1.1 0 2-.9 2-2V8l-6-6zm-3.06 16L7.4 14.46l1.41-1.41 2.12 2.12 4.24-4.24 1.41 1.41L10.94 18zM13 9V3.5L18.5 9H13z"/></svg>
<svg style="position:absolute;left:2134.60px;top:63.70px" width="29.7" height="29.7" viewBox="0 0 24 24"><path fill="#d5ed8b" d="M12 22c1.1 0 2-.9 2-2h-4c0 1.1.89 2 2 2zm6-6v-5c0-3.07-1.64-5.64-4.5-6.32V4c0-.83-.67-1.5-1.5-1.5s-1.5.67-1.5 1.5v.68C7.63 5.36 6 7.92 6 11v5l-2 2v1h16v-1l-2-2z"/></svg>
<svg style="position:absolute;left:2174.85px;top:63.70px" width="29.7" height="29.7" viewBox="0 0 24 24"><path fill="#d5ed8b" d="M11 18h2v-2h-2v2zm1-16C6.48 2 2 6.48 2 12s4.48 10 10 10 10-4.48 10-10S17.52 2 12 2zm0 18c-4.41 0-8-3.59-8-8s3.59-8 8-8 8 3.59 8 8-3.59 8-8 8zm0-14c-2.21 0-4 1.79-4 4h2c0-1.1.9-2 2-2s2 .9 2 2c0 2-3 1.75-3 5h2c0-2.25 3-2.5 3-5 0-2.21-1.79-4-4-4z"/></svg>
<svg style="position:absolute;left:715px;top:40px;filter:drop-shadow(0 1.5px 2px rgba(0,0,0,.3));overflow:visible" width="155" height="100" viewBox="715 40 155 100"><ellipse cx="791.2" cy="88.3" rx="67.1" ry="39.7" fill="none" stroke="#ff8000" stroke-width="5.5"/></svg>
</header>
</div>
</body>
</html>
